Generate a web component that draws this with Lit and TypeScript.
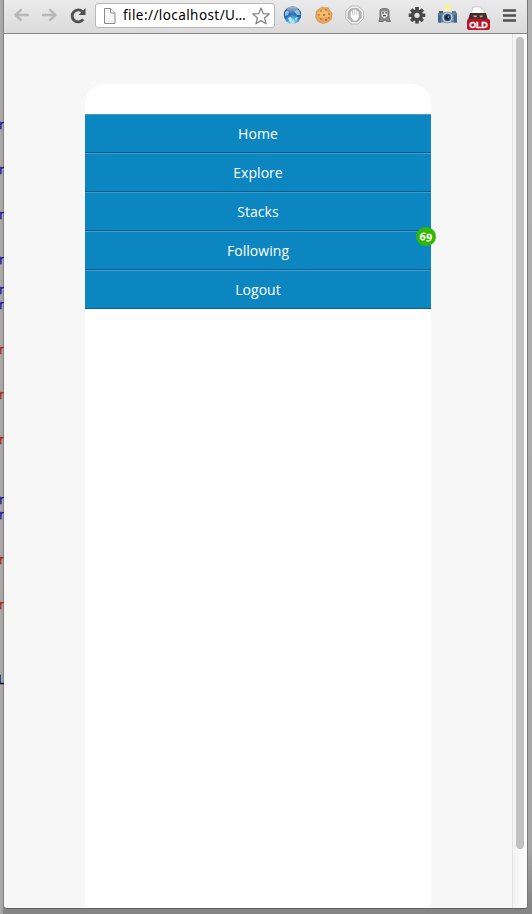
import { LitElement, html, css, svg } from "lit";
import { customElement } from "lit/decorators.js";

// Rows of the editor that peeks out behind the browser window, 15px apart.
const codeRows: Record<number, string> = {
  8: "blue", 11: "blue", 14: "blue", 17: "blue", 19: "blue", 20: "blue",
  23: "red", 26: "red", 29: "red", 33: "blue", 34: "blue", 37: "red", 40: "red", 45: "dark",
};

@customElement("code-gutter")
class CodeGutter extends LitElement {
  static styles = css`
    :host { display: block; width: 4px; flex: none; overflow: hidden; box-sizing: border-box; background: linear-gradient(90deg, #adacaa, #a3a2a0 75%, #858483 75%); }
    .rows { margin-top: -2px; }
    .row { height: 15px; font: 12px/15px "DejaVu Sans Mono", monospace; margin-left: -2px; white-space: pre; -webkit-text-stroke: 0.3px; }
    .blue { color: #2410b0; }
    .red { color: #b02810; }
    .dark { color: #1a0628; line-height: 15px; }
  `;
  render() {
    return html`<div class="rows">${Array.from({ length: 60 }, (_, i) => {
      const c = codeRows[i];
      return html`<div class="row ${c ?? ""}">${c ? (c === "dark" ? "L" : "r") : " "}</div>`;
    })}</div>`;
  }
}

const arrow = svg`<path d="M8 3 L2.500 8 L8 13 M3 8 H15" fill="none" stroke="#b8b8b8" stroke-width="2.400" stroke-linecap="round" stroke-linejoin="round"/>`;

@customElement("browser-toolbar")
class BrowserToolbar extends LitElement {
  static styles = css`
    :host { display: flex; height: 34px; box-sizing: border-box; border-bottom: 1px solid #858585; background: linear-gradient(#ebebeb, #dadada); padding-left: 9px; }
    svg { display: block; flex: none; overflow: visible; }
    .back { width: 17px; height: 16px; margin: 7px 11px 0 0; }
    .forward { width: 17px; height: 16px; margin: 7px 12px 0 0; transform: scaleX(-1); }
    .reload { width: 17px; height: 18px; margin: 7px 8px 0 0; }
    .address { display: flex; flex: none; box-sizing: border-box; width: 180px; height: 25px; margin: 3px 8px 0 0; border: 1px solid #b9b9b9; border-radius: 3px; background: #fff; padding-left: 7px; }
    .page { width: 13px; height: 16px; margin: 4px 7px 0 0; }
    .url { width: 125px; font: 13.5px/23px "Noto Sans", "Open Sans", sans-serif; letter-spacing: 0.42px; color: #000; white-space: nowrap; }
    .star { width: 18px; height: 18px; margin: 3px 0 0 4px; }
    .ext { width: 20px; height: 20px; margin: 5px 11px 0 0; }
    .tight { margin: 5px 12px 0 -1px; }
    .gear { margin-left: -1px; }
    .incog { width: 24px; height: 26px; margin: 4px 11px 0 -2px; }
    .menu { width: 13px; height: 14px; margin: 9px 0 0 2px; }
    .badge { font: 700 9px "Liberation Sans", sans-serif; fill: #fff; stroke: #fff; stroke-width: 0.3; }
  `;
  render() {
    return html`
      <svg class="back" viewBox="0 0 17 16">${arrow}</svg>
      <svg class="forward" viewBox="0 0 17 16">${arrow}</svg>
      <svg class="reload" viewBox="0 0 17 18">
        <path d="M13.200 12.200 A6 6 0 1 1 12.500 4.800" fill="none" stroke="#505050" stroke-width="2.800"/>
        <path d="M15.500 1 V8 H8.500 Z" fill="#505050"/>
      </svg>
      <div class="address">
        <svg class="page" viewBox="0 0 13 16">
          <path d="M1.500 .5 H7.500 L12 5 V15.500 H1.500 Z" fill="#f7f7f7" stroke="#8a8a8a"/>
          <path d="M7.500 .5 V5 H12" fill="#fff" stroke="#8a8a8a"/>
        </svg>
        <span class="url">file://localhost/U…</span>
        <svg class="star" viewBox="0 0 18 18"><path d="M9 1 L11.200 6.600 L17.200 7 L12.600 10.900 L14.100 16.800 L9 13.600 L3.900 16.800 L5.400 10.900 L.8 7 L6.800 6.600 Z" fill="#fff" stroke="#858585" stroke-width="1.300" stroke-linejoin="round"/></svg>
      </div>
      <svg class="ext" viewBox="0 0 20 20">
        <defs>
          <radialGradient id="g" cx=".5" cy=".9" r=".85"><stop offset="0" stop-color="#c5f3ff"/><stop offset=".3" stop-color="#49a9e0"/><stop offset=".6" stop-color="#2060a8"/><stop offset="1" stop-color="#184684"/></radialGradient>
          <linearGradient id="s" x2="0" y2="1"><stop offset="0" stop-color="#fff" stop-opacity=".65"/><stop offset="1" stop-color="#fff" stop-opacity=".1"/></linearGradient>
        </defs>
        <circle cx="9.500" cy="10" r="8.700" fill="url(#g)"/>
        <ellipse cx="9.500" cy="5.200" rx="6" ry="3.700" fill="url(#s)"/>
        <path d="M2 7 Q4 5 6 7 L5 10 L2 11 Z M11 6 L16 5 L17.500 10 L14 10 Z" fill="#b9dff8" opacity=".75"/>
        <path d="M5 13 L8 12 L9 15 L7 17 Z M12 13 L15 12 L13 16 Z" fill="#e1faff" opacity=".8"/>
      </svg>
      <svg class="ext" viewBox="0 0 20 20">
        <path d="M8 2 L11 3 L14 2.500 L16 6 L18 8 L17.500 14 L14 17 L9 18.500 L4 16.500 L1.500 12 L2.500 6 L5 4 Z" fill="#e9a557" stroke="#d69550" stroke-width=".8" stroke-linejoin="round"/>
        <path d="M4 8 Q6 4 11 5 Q15 7 15 11 Q10 14 5 12 Z" fill="#f5c27a" opacity=".75"/>
        <g fill="#93602f"><circle cx="7" cy="6" r=".8"/><circle cx="12" cy="5" r=".8"/><circle cx="5" cy="10" r=".8"/><circle cx="10" cy="10" r=".9"/><circle cx="15" cy="9" r=".8"/><circle cx="7" cy="14" r=".8"/><circle cx="12" cy="15" r=".9"/><circle cx="15" cy="13" r=".7"/></g>
      </svg>
      <svg class="ext" viewBox="0 0 20 20">
        <path d="M6 1 H13 L18.500 6 V13.500 L13 19 H6 L.8 13.500 V6 Z" fill="#eee" stroke="#bcbcbc"/>
        <path d="M6.700 3 H12.400 L16.700 7 V13 L12.400 17 H6.700 L2.700 13 V7 Z" fill="#b4b4b4"/>
        <path d="M6.500 7 V12 M8.600 5.300 V11 M10.700 5.300 V11 M12.800 7 V12" stroke="#fff" stroke-width="1.500" stroke-linecap="round"/>
        <path d="M5.800 10 H13.500 V12 L12 15.500 H8 Z" fill="#fff"/>
      </svg>
      <svg class="ext tight" viewBox="0 0 20 20">
        <path d="M5 5 Q6 3.500 9.500 3.500 Q14 3.500 14 6 V13 L15.500 16.500 H12 L10 15 L8 16.500 H4 L5 12 Z" fill="#8b8b8b" stroke="#707070"/>
        <path d="M6.500 6.500 H12.500 V11 L9.500 13.500 L6.500 11 Z" fill="#e8e8e8"/>
        <path d="M7 7.800 H9 M10.300 7.800 H12.300 M8 10.700 H11" stroke="#505050" stroke-width="1.200"/>
      </svg>
      <svg class="ext gear" viewBox="0 0 20 20">
        <g stroke="#484848" stroke-width="3.600"><path d="M11 2 V18.500 M2.700 10.300 H19.300 M5.200 4.500 L16.800 16.100 M16.800 4.500 L5.200 16.100"/></g>
        <circle cx="11" cy="10.300" r="6" fill="#484848"/><circle cx="11" cy="10.300" r="2.600" fill="#e4e4e4"/>
      </svg>
      <svg class="ext" viewBox="0 0 20 20">
        <path d="M6.500 .5 H14 L13 4 H8.500 Z" fill="#fff46b"/><path d="M8.500 4 H13 V7 H7 Z" fill="#f4f4ec"/>
        <rect x="1" y="7.500" width="19" height="10" rx="1" fill="#5c80a6"/><path d="M1 10 H4 V17.500 H1 Z M17 10 H20 V17.500 H17 Z" fill="#3e6490"/>
        <rect x="2" y="6" width="4" height="2" fill="#555"/><rect x="15" y="6" width="4" height="2" fill="#777"/>
        <circle cx="10.500" cy="12.500" r="5.500" fill="#c3cfd8" stroke="#70869a" stroke-width=".7"/><circle cx="10.500" cy="12.500" r="3.700" fill="#315c88"/><circle cx="10.500" cy="12.500" r="2.300" fill="#111b26"/>
        <circle cx="11.300" cy="12" r=".7" fill="#dfeefa"/>
      </svg>
      <svg class="incog" viewBox="0 0 24 26">
        <path d="M7 3 H15 L18 6 V11 H5 Z" fill="#fff" stroke="#bbb" stroke-width=".7"/><path d="M15 3 V6 H18" fill="#ddd"/>
        <path d="M4 9 H20 L22 16 H2 Z" fill="#462d2d"/><path d="M7 11.500 H11 L10.500 13.300 H8 Z M13.500 11.500 H17.500 L16 13.300 H14 Z" fill="#b8a4a4"/>
        <rect x="1" y="15" width="23" height="11" rx="2" fill="#bd1226"/>
        <text class="badge" x="3.300" y="23.800" textLength="18.500">OLD</text>
      </svg>
      <svg class="menu" viewBox="0 0 13 14"><path d="M0 1.500 H13 M0 6.500 H13 M0 11.500 H13" stroke="#505050" stroke-width="2.600"/></svg>
    `;
  }
}

@customElement("nav-menu")
class NavMenu extends LitElement {
  static styles = css`
    :host { display: block; }
    .item { position: relative; box-sizing: border-box; height: 39px; border-top: 1px solid #3d9ecb; border-bottom: 1px solid #075e8b; background: #0c86c0; color: #fff; text-align: center; font: 14px/37px "Open Sans", "Noto Sans", sans-serif; letter-spacing: 0.05px; }
    .count { position: absolute; top: -5px; right: -5px; width: 20px; height: 19px; border-radius: 50%; background: #33b800; font: 700 11px/19px "Open Sans", sans-serif; letter-spacing: 0; transform: rotate(10deg); }
  `;
  private items = [
    { label: "Home" }, { label: "Explore" }, { label: "Stacks" },
    { label: "Following", count: 69 }, { label: "Logout" },
  ];
  render() {
    return this.items.map((i) => html`
      <div class="item">${i.label}${i.count ? html`<span class="count">${i.count}</span>` : ""}</div>`);
  }
}

@customElement("app-root")
class AppRoot extends LitElement {
  static styles = css`
    :host { display: flex; height: 914px; overflow: hidden; background: linear-gradient(#b0b0b0, #a5a5a5 93%, #858585 99%); }
    .window { display: flex; flex-direction: column; width: 523px; height: 908px; border-bottom: 1px solid #60635f; border-right: 1px solid #777; border-radius: 0 0 4px 4px; overflow: hidden; background: #f7f7f7; }
    .view { display: flex; flex: 1; min-height: 0; }
    .content { flex: 1; overflow: hidden; padding: 50px 81px 0; background: #f7f7f7; }
    .card { height: 805px; padding-top: 30px; border-radius: 20px; background: #fff; }
    .track { box-sizing: border-box; width: 15px; padding: 3px 3px 0; border-left: 1px solid #e3e3e3; background: linear-gradient(90deg, #f3f3f3, #fcfcfc); }
    .thumb { width: 8px; height: 812px; border-radius: 4px; background: #c1c1c1; }
  `;
  render() {
    return html`
      <code-gutter></code-gutter>
      <div class="window">
        <browser-toolbar></browser-toolbar>
        <div class="view">
          <div class="content"><div class="card"><nav-menu></nav-menu></div></div>
          <div class="track"><div class="thumb"></div></div>
        </div>
      </div>
    `;
  }
}
